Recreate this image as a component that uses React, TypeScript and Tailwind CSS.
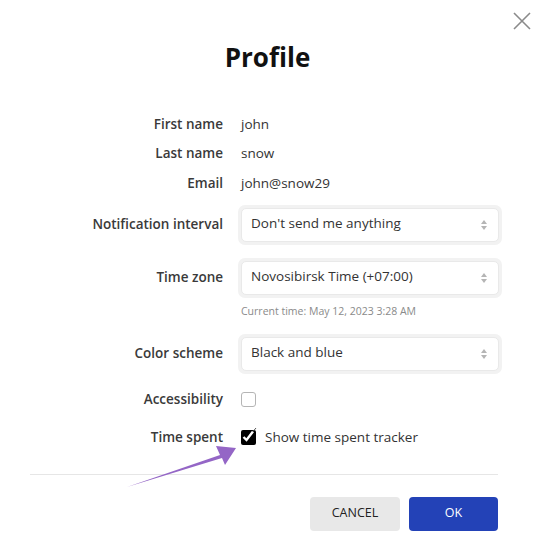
import React from 'react';

const font = { fontFamily: '"Open Sans", "Noto Sans", sans-serif' };

const SelectArrows = () => (
  <svg width="8" height="12" viewBox="0 0 8 12" className="text-[#b5b5b5]">
    <path d="M4 1 L7 5 L1 5 Z" fill="currentColor" />
    <path d="M4 11 L7 7 L1 7 Z" fill="currentColor" />
  </svg>
);

const Select = ({ value }: { value: string }) => (
  <div className="w-[264px] p-[3px] bg-[#f2f2f2] rounded-[7px]">
    <div className="h-[34px] bg-white rounded-[5px] border border-[#e9e9e9] flex items-center justify-between pl-[9px] pr-[10px]">
      <span className="text-[13.5px] font-medium text-[#333] -mt-[2px]">{value}</span>
      <SelectArrows />
    </div>
  </div>
);

const Label = ({ children }: { children: React.ReactNode }) => (
  <div className="w-[223px] shrink-0 text-right text-[13.5px] font-semibold text-[#3a3a3a]">{children}</div>
);

const TextRow = ({ label, value }: { label: string; value: string }) => (
  <div className="flex items-center h-[29.5px] gap-[18px]">
    <Label>{label}</Label>
    <span className="text-[13.5px] font-medium text-[#333]">{value}</span>
  </div>
);

export default function App() {
  return (
    <div style={font} className="relative w-[535px] h-[552px] bg-white overflow-hidden">
      {/* close */}
      <button className="absolute right-[3px] top-[11px] w-[20px] h-[20px] flex items-center justify-center">
        <svg width="18" height="18" viewBox="0 0 18 18">
          <path d="M1 1 L17 17 M17 1 L1 17" stroke="#8a8a8a" strokeWidth="1.6" />
        </svg>
      </button>

      <h1 className="pt-[40px] text-center text-[26px] leading-[34px] font-bold text-[#111]">Profile</h1>

      <div className="mt-[35px]">
        <TextRow label="First name" value="john" />
        <TextRow label="Last name" value="snow" />
        <TextRow label="Email" value="john@snow29" />
      </div>

      <div className="mt-[7px] flex items-center gap-[15px]">
        <Label>Notification interval</Label>
        <Select value="Don't send me anything" />
      </div>

      <div className="mt-[13px] flex items-center gap-[15px]">
        <Label>Time zone</Label>
        <Select value="Novosibirsk Time (+07:00)" />
      </div>
      <div className="ml-[241px] mt-[6px] text-[10.5px] leading-[14px] text-[#8a8a8a]">Current time: May 12, 2023 3:28 AM</div>

      <div className="mt-[16px] flex items-center gap-[15px]">
        <Label>Color scheme</Label>
        <Select value="Black and blue" />
      </div>

      <div className="mt-[14px] flex items-center h-[24px] gap-[18px]">
        <Label>Accessibility</Label>
        <span className="w-[15px] h-[15px] rounded-[3px] border border-[#b5b5b5] bg-white" />
      </div>

      <div className="mt-[14px] flex items-center h-[24px] gap-[18px]">
        <Label>Time spent</Label>
        <div className="flex items-center gap-[9px]">
          <span className="relative w-[15px] h-[15px] rounded-[2px] bg-black">
            <svg className="absolute -left-[1px] -top-[4px]" width="20" height="20" viewBox="0 0 20 20">
              <path d="M3.5 11 L6.5 14 L13 5.5" stroke="white" strokeWidth="2.4" fill="none" />
              <path d="M13 5.5 L16 2" stroke="#555" strokeWidth="1" fill="none" />
            </svg>
          </span>
          <span className="text-[13.5px] text-[#333]">Show time spent tracker</span>
        </div>
      </div>

      <div className="mt-[24px] mx-[30px] mr-[37px] border-t border-[#e6e6e6]" />

      <div className="mt-[22px] flex justify-end gap-[9px] pr-[37px]">
        <button className="w-[90px] h-[34px] rounded-[4px] bg-[#e8e8e8] text-[12.5px] text-[#222]">CANCEL</button>
        <button className="w-[89px] h-[34px] rounded-[4px] bg-[#2342b7] text-[12.5px] text-white font-medium">OK</button>
      </div>

      {/* annotation arrow */}
      <svg className="absolute left-0 top-0 pointer-events-none" width="535" height="552" viewBox="0 0 535 552">
        <path d="M127 487 L220 455 L216 446 L236 448 L225 465 L222 458 Z" fill="#9466c6" />
      </svg>
    </div>
  );
}
